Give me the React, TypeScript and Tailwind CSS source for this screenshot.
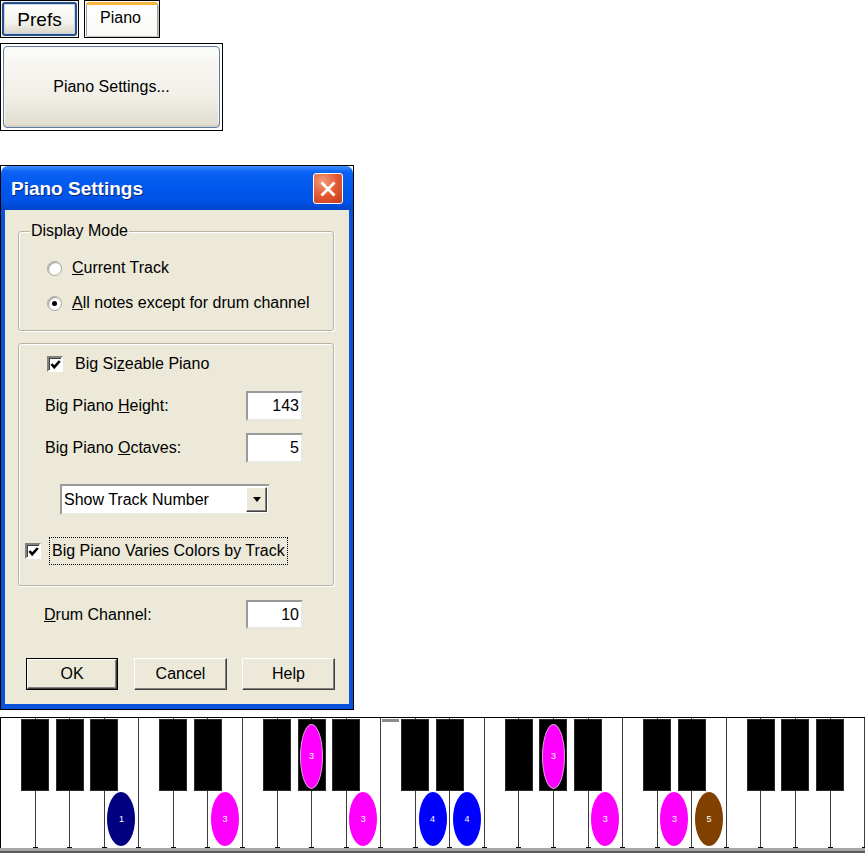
import clsx from "clsx";
import type { ReactNode } from "react";

const KEY_W = 864 / 25;
const blackKeys = [1, 2, 3, 5, 6, 8, 9, 10, 12, 13, 15, 16, 17, 19, 20, 22, 23, 24];

type Note = { at: number; black: boolean; track: number; color: string };

const notes: Note[] = [
  { at: 3, black: false, track: 1, color: "#000080" },
  { at: 6, black: false, track: 3, color: "#ff00ff" },
  { at: 9, black: true, track: 3, color: "#ff00ff" },
  { at: 10, black: false, track: 3, color: "#ff00ff" },
  { at: 12, black: false, track: 4, color: "#0000ff" },
  { at: 13, black: false, track: 4, color: "#0000ff" },
  { at: 16, black: true, track: 3, color: "#ff00ff" },
  { at: 17, black: false, track: 3, color: "#ff00ff" },
  { at: 19, black: false, track: 3, color: "#ff00ff" },
  { at: 20, black: false, track: 5, color: "#804000" },
];

function Radio({ checked }: { checked?: boolean }) {
  return (
    <span className="flex h-[15px] w-[15px] shrink-0 items-center justify-center rounded-full border border-[#a9a79c] bg-white shadow-[inset_1px_1px_1px_#9d9d9d]">
      {checked ? <span className="h-[5px] w-[5px] rounded-full bg-black" /> : null}
    </span>
  );
}

function CheckBox() {
  return (
    <span className="flex h-[16px] w-[16px] shrink-0 items-center justify-center border-2 border-b-white border-l-[#808080] border-r-white border-t-[#808080] bg-white shadow-[inset_1px_1px_0_#404040]">
      <svg width="11" height="11" viewBox="0 0 11 11">
        <path d="M1.5 5 L4.2 8.2 L9.8 2" fill="none" stroke="black" strokeWidth="2.6" />
      </svg>
    </span>
  );
}

function NumField({ value }: { value: string }) {
  return (
    <div className="flex h-full w-[57px] items-center justify-end border-2 border-b-[#e9e8e1] border-l-[#9a9a9a] border-r-[#e9e8e1] border-t-[#9a9a9a] bg-white pr-[2px] text-[16px]">
      {value}
    </div>
  );
}

function Btn({ children, width, primary }: { children: ReactNode; width: string; primary?: boolean }) {
  return (
    <div className={clsx("h-[32px] bg-[#ece9d8]", width, primary && "border border-black")}>
      <div className="flex h-full items-center justify-center border border-b-[#404040] border-l-white border-r-[#404040] border-t-white text-[16px] shadow-[inset_-1px_-1px_0_#808080]">
        {children}
      </div>
    </div>
  );
}

function Dialog() {
  return (
    <div className="mt-[34px] flex h-[545px] w-[354px] flex-col border border-black">
      <div className="flex h-[44px] shrink-0 items-start justify-between rounded-t-[7px] bg-[linear-gradient(#3d8dff,#0a61f2_14%,#0058ee_50%,#0052e4_82%,#0044c9)]">
        <span className="pl-[10px] pt-[12px] text-[19px] font-bold leading-[22px] text-white [text-shadow:1px_1px_0_#0a2a7a]">
          Piano Settings
        </span>
        <div className="mr-[10px] mt-[7px] flex h-[31px] w-[30px] items-center justify-center rounded-[3px] border border-white bg-[radial-gradient(circle_at_30%_25%,#f49a7c,#e25a33_50%,#c63c17)]">
          <svg width="16" height="16" viewBox="0 0 16 16">
            <path d="M2.5 2.5 L13.5 13.5 M13.5 2.5 L2.5 13.5" stroke="white" strokeWidth="2.8" strokeLinecap="square" />
          </svg>
        </div>
      </div>
      <div className="flex flex-1 bg-[#0a52dc] px-[4px] pb-[5px]">
        <div className="flex flex-1 flex-col bg-[#ece9d8] text-[16px] leading-[18px]">
          <div className="relative ml-[13px] mt-[21px] h-[100px] w-[316px] rounded-[3px] border border-[#b7b5a8] shadow-[inset_1px_1px_0_#fff,1px_1px_0_#fff]">
            <span className="absolute left-[11px] top-[-10px] bg-[#ece9d8] px-px">Display Mode</span>
            <div className="flex flex-col gap-[15px] pl-[28px] pt-[26px]">
              <div className="flex h-[20px] items-center gap-[10px]">
                <Radio />
                <span>
                  <u>C</u>urrent Track
                </span>
              </div>
              <div className="flex h-[20px] items-center gap-[10px]">
                <Radio checked />
                <span>
                  <u>A</u>ll notes except for drum channel
                </span>
              </div>
            </div>
          </div>

          <div className="ml-[13px] mt-[12px] flex h-[243px] w-[316px] flex-col rounded-[3px] border border-[#b7b5a8] shadow-[inset_1px_1px_0_#fff,1px_1px_0_#fff]">
            <div className="ml-[28px] mt-[10px] flex h-[20px] items-center gap-[12px]">
              <CheckBox />
              <span>
                Big Si<u>z</u>eable Piano
              </span>
            </div>
            <div className="ml-[26px] mt-[17px] flex h-[30px] items-center">
              <span className="w-[201px]">
                Big Piano <u>H</u>eight:
              </span>
              <NumField value="143" />
            </div>
            <div className="ml-[26px] mt-[12px] flex h-[30px] items-center">
              <span className="w-[201px]">
                Big Piano <u>O</u>ctaves:
              </span>
              <NumField value="5" />
            </div>
            <div className="ml-[41px] mt-[21px] flex h-[31px] w-[210px] items-center border-2 border-b-[#e9e8e1] border-l-[#9a9a9a] border-r-[#e9e8e1] border-t-[#9a9a9a] bg-white pl-[2px]">
              <span>Show Track Number</span>
              <div className="ml-auto mr-px flex h-[25px] w-[21px] items-center justify-center border border-b-[#404040] border-l-white border-r-[#404040] border-t-white bg-[#ece9d8] shadow-[inset_-1px_-1px_0_#808080]">
                <svg width="8" height="5" viewBox="0 0 8 5">
                  <path d="M0 0 H8 L4 5 Z" fill="black" />
                </svg>
              </div>
            </div>
            <div className="ml-[6px] mt-[22px] flex h-[28px] items-center gap-[8px]">
              <CheckBox />
              <span className="flex h-full items-center border border-dotted border-black px-[2px]">
                Big Piano Varies Colors by Track
              </span>
            </div>
          </div>

          <div className="ml-[39px] mt-[14px] flex h-[29px] items-center">
            <span className="w-[202px]">
              <u>D</u>rum Channel:
            </span>
            <NumField value="10" />
          </div>

          <div className="ml-[21px] mt-[29px] flex gap-[16px]">
            <Btn width="w-[92px]" primary>
              OK
            </Btn>
            <Btn width="w-[93px]">Cancel</Btn>
            <div className="-ml-px">
              <Btn width="w-[93px]">Help</Btn>
            </div>
          </div>
        </div>
      </div>
    </div>
  );
}

function Piano() {
  return (
    <div className="mt-[7px] w-[865px]">
      <div className="relative flex h-[131px] border-l border-t border-black bg-white">
        {Array.from({ length: 25 }, (_, i) => (
          <div key={i} className="relative flex-1 border-r border-[#3c3c3c]">
            <span className="absolute bottom-0 right-[-3px] h-px w-[5px] bg-black" />
          </div>
        ))}
        <span className="absolute left-[381px] top-px h-[3px] w-[17px] bg-[#8c8c8c]" />
        {blackKeys.map((k) => (
          <span
            key={k}
            className="absolute top-px h-[72px] w-[28px] border border-[#2a2a2a] bg-black"
            style={{ left: k * KEY_W - 14.5 }}
          />
        ))}
        {notes.map((n) => {
          const center = n.black ? n.at * KEY_W - 0.5 : (n.at + 0.5) * KEY_W - 0.5;
          return (
            <span
              key={n.at}
              className={clsx(
                "absolute flex items-center justify-center rounded-[50%] text-[9px] leading-none text-white",
                n.black ? "top-[6px] h-[65px] w-[23px] border border-[#d9a0d9]" : "top-[74px] h-[54px] w-[28px]",
              )}
              style={{ left: center - (n.black ? 11.5 : 14), backgroundColor: n.color }}
            >
              {n.track}
            </span>
          );
        })}
      </div>
      <div className="h-[3px] bg-[#a6a6a6]" />
      <div className="h-[2px] bg-[#5c5c5c]" />
    </div>
  );
}

export default function App() {
  return (
    <div className="h-[853px] w-[865px] overflow-hidden bg-white font-['Liberation_Sans',Arial,sans-serif] text-black">
      <div className="flex h-[38px] gap-[5px]">
        <div className="h-[38px] w-[79px] border border-black bg-[#f4f3ee] p-px">
          <div className="flex h-full items-center justify-center rounded-[3px] border-2 border-[#26508c] bg-[linear-gradient(#ffffff,#f2f0e8_65%,#d8d4c6)] text-[19px] leading-none shadow-[inset_0_0_0_1px_#c6d4e8]">
            Prefs
          </div>
        </div>
        <div className="h-[38px] w-[76px] border border-black bg-white p-px">
          <div className="h-full rounded-t-[3px] border-x border-t-[3px] border-x-[#9aa3a4] border-t-[#f7b43a] bg-[linear-gradient(#ffffff,#f8f8f5)] pl-[13px] pt-[4px] text-[16px] leading-[18px] shadow-[1px_1px_0_#c8c6bd]">
            Piano
          </div>
        </div>
      </div>
      <div className="mt-[5px] h-[88px] w-[223px] border border-black bg-white p-[2px]">
        <div className="flex h-full items-center justify-center rounded-[4px] border border-[#5d7ca6] bg-[linear-gradient(#fbfbf8,#f1efe7_60%,#e0dccf)] text-[16px] shadow-[inset_0_-2px_0_#d6d1c1,inset_0_0_0_1px_#f8f8f4]">
          Piano Settings...
        </div>
      </div>
      <Dialog />
      <Piano />
    </div>
  );
}
